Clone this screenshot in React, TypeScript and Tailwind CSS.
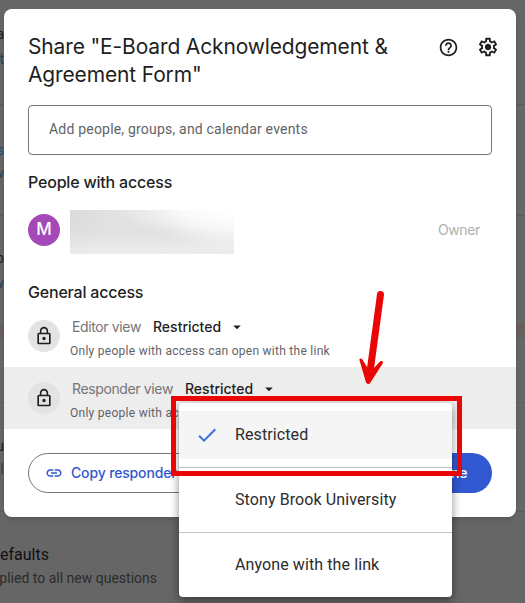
import { MdCheck, MdHelpOutline, MdLink, MdLockOutline, MdArrowDropDown } from "react-icons/md";

type AccessRowProps = {
  label: string;
  highlighted?: boolean;
};

const menuItems = ["Restricted", "Stony Brook University", "Anyone with the link"];

const backdropLines = [
  { top: 104, height: 1, color: "#5b5b5b" },
  { top: 215, height: 1, color: "#5b5b5b" },
  { top: 324, height: 14, color: "#685f5f" },
  { top: 402, height: 1, color: "#5b5b5b" },
  { top: 511, height: 1, color: "#5b5b5b" },
];

// ends of the form's text that show left of the dialog
const backdropText = [
  { top: 24, text: "a", color: "#1c1c1c" },
  { top: 49, text: "t", color: "#1f4a52" },
  { top: 140, text: "s", color: "#27506e" },
  { top: 163, text: "w", color: "#2f4052" },
  { top: 248, text: "o", color: "#1c1c1c" },
  { top: 273, text: "w", color: "#2f4052" },
  { top: 436, text: "u", color: "#1c1c1c" },
  { top: 459, text: "l", color: "#4a3a30" },
];

function GearIcon() {
  return (
    <svg className="size-[22px]" viewBox="0 -960 960 960" fill="currentColor">
      <path d="m370-80-16-128q-13-5-24.500-12T307-235l-119 50L78-375l103-78q-1-7-1-13.500v-27q0-6.500 1-13.500L78-585l110-190 119 50q11-8 23-15t24-12l16-128h220l16 128q13 5 24.500 12t22.500 15l119-50 110 190-103 78q1 7 1 13.500v27q0 6.500-2 13.500l103 78-110 190-118-50q-11 8-23 15t-24 12L590-80H370Zm70-80h79l14-106q31-8 57.500-23.500T639-327l99 41 39-68-86-65q5-14 7-29.500t2-31.500q0-16-2-31.500t-7-29.500l86-65-39-68-99 42q-22-23-48.500-38.500T533-694l-13-106h-79l-14 106q-31 8-57.500 23.500T321-633l-99-41-39 68 86 64q-5 15-7 30t-2 32q0 16 2 31t7 30l-86 65 39 68 99-42q22 23 48.500 38.500T427-266l13 106Zm42-180q58 0 99-41t41-99q0-58-41-99t-99-41q-59 0-99.500 41T342-480q0 58 40.500 99t99.500 41Z" />
    </svg>
  );
}

function AccessRow({ label, highlighted }: AccessRowProps) {
  return (
    <div className={`flex h-[62px] pl-6 ${highlighted ? "bg-[#ededed]" : ""}`}>
      <div className="mt-[15px] flex size-8 items-center justify-center rounded-full bg-[#e3e3e3]">
        <MdLockOutline className="size-5" />
      </div>
      <div className="ml-2.5 pt-3">
        <div className="flex h-5 items-center pl-0.5 font-['Inter'] text-sm whitespace-nowrap">
          <span className="tracking-[-0.37px] text-[#757575]">{label}</span>
          <span className="ml-3 font-medium text-[#1f1f1f]">Restricted</span>
          <MdArrowDropDown className="ml-[7px] size-[18px] text-[#1f1f1f]" />
        </div>
        <p className="mt-1 text-xs leading-5 tracking-[0.27px] whitespace-nowrap text-[#5f6368]">Only people with access can open with the link</p>
      </div>
    </div>
  );
}

function Backdrop() {
  return (
    <div className="absolute inset-0 bg-[#666666]">
      {backdropLines.map((line) => (
        <div key={line.top} className="absolute w-full" style={{ top: line.top, height: line.height, backgroundColor: line.color }} />
      ))}
      {backdropText.map((item) => (
        <span key={item.top} className="absolute right-[521px] text-sm leading-5" style={{ top: item.top, color: item.color }}>
          {item.text}
        </span>
      ))}
      <p className="absolute top-[543px] left-0 text-base whitespace-nowrap text-[#111]">efaults</p>
      <p className="absolute top-[568px] right-[368px] text-sm whitespace-nowrap text-[#2b2b2b]">plied to all new questions</p>
    </div>
  );
}

function Menu() {
  return (
    <div className="absolute top-[403px] left-[179px] w-[273px] rounded bg-white py-2 shadow-[0_3px_10px_rgba(0,0,0,0.45)]">
      {menuItems.map((item, i) => (
        <div key={item}>
          {i > 0 && <div className="my-2 h-px bg-[#c4c4c4]" />}
          <div className={`flex h-12 items-center pl-4 text-base tracking-[0.1px] text-[#2c2c2c] ${i === 0 ? "bg-[#f5f5f5]" : ""}`}>
            <span className="w-10">{i === 0 && <MdCheck className="size-6 text-[#3b72e0]" />}</span>
            {item}
          </div>
        </div>
      ))}
    </div>
  );
}

function Annotation() {
  return (
    <>
      <div className="absolute top-[396px] left-[171px] h-[80px] w-[291px] border-5 border-[#eb0606]" />
      <svg className="absolute top-[285px] left-[350px]" width="50" height="105" viewBox="350 285 50 105">
        <path d="M380.500 294.500L370 372" stroke="#eb0606" strokeWidth="7" strokeLinecap="round" />
        <path d="M359.300 359.500q1-2 3.200 0l6 10h4l8-8.500q3-.5 2.500 2L370.500 382.500q-2 3-4.500 0z" fill="#eb0606" />
      </svg>
    </>
  );
}

export default function App() {
  return (
    <div className="relative h-[603px] w-[525px] overflow-hidden font-['Roboto',sans-serif]">
      <Backdrop />
      <main className="relative mt-[9px] ml-1 h-[508px] w-[512px] rounded-lg bg-white text-[#1f1f1f] shadow-md">
        <header className="flex items-start justify-between px-6 pt-6">
          <h1 className="w-[380px] font-['Inter'] text-[21px] leading-7 tracking-[-0.15px]">
            Share "E-Board Acknowledgement &amp;
            <br />
            Agreement Form"
          </h1>
          <div className="mt-[3px] -mr-[7px] flex items-center gap-[18.5px]">
            <MdHelpOutline className="size-[21px]" />
            <GearIcon />
          </div>
        </header>
        <div className="mx-6 mt-4 flex h-[50px] items-center rounded border border-[#747775] px-5 pb-0.5 text-sm tracking-[0.2px] text-[#5f6368]">
          Add people, groups, and calendar events
        </div>
        <h2 className="mt-[15px] pl-6 font-['Inter'] text-base font-medium tracking-[-0.2px]">People with access</h2>
        <div className="mt-4 flex h-11 items-center pr-9 pl-6">
          <div className="mb-1 flex size-8 items-center justify-center rounded-full bg-[#a548b8] font-['Inter'] text-[17px] font-medium text-white">M</div>
          <div className="ml-2.5 h-11 w-[164px] bg-[radial-gradient(ellipse_at_100%_0%,#ffffff_0%,#fafafa_22%,#fafafa00_50%),linear-gradient(to_bottom,#ececec00_45%,#ececec_100%),linear-gradient(to_right,#dcdcdc,#e2e2e2_30%,#dfdfdf_60%,#f0f0f0)]" />
          <span className="mb-1 ml-auto font-['Inter'] text-sm tracking-[-0.35px] text-[#b0b0b0]">Owner</span>
        </div>
        <h2 className="mt-[26px] mb-[1px] pl-6 font-['Inter'] text-base font-medium tracking-[-0.2px]">General access</h2>
        <AccessRow label="Editor view" />
        <AccessRow label="Responder view" highlighted />
        <footer className="mt-6 flex justify-between px-6 font-['Inter'] text-sm font-medium">
          <div className="flex h-10 w-[200px] items-center gap-2 rounded-full border border-[#747775] pl-4 tracking-[-0.15px] whitespace-nowrap text-[#3158d1]">
            <MdLink className="size-[18px]" />
            Copy responder link
          </div>
          <div className="flex h-10 w-[84px] items-center justify-center rounded-full bg-[#3158d1] text-white">Done</div>
        </footer>
      </main>
      <Menu />
      <Annotation />
    </div>
  );
}
